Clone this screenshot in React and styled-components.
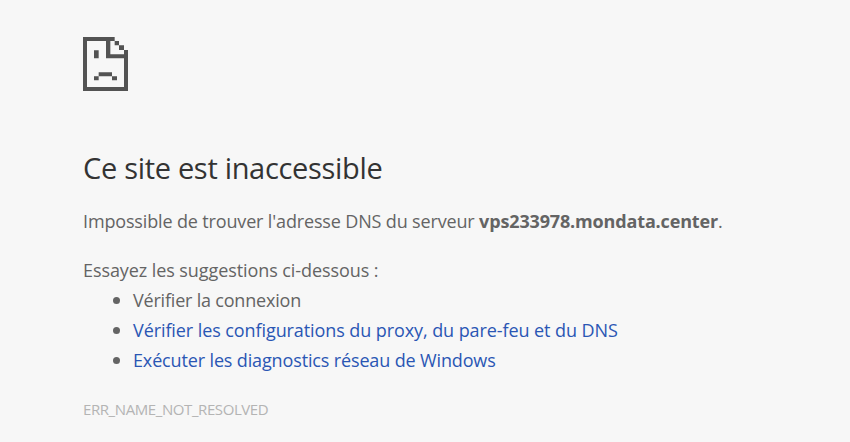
import React from "react";
import styled, { createGlobalStyle } from "styled-components";

const GlobalStyle = createGlobalStyle`
  body {
    margin: 0;
    background: #f7f7f7;
    color: #646464;
    font-family: "Open Sans", "Noto Sans", sans-serif;
  }
`;

const Page = styled.main`
  box-sizing: border-box;
  height: 442px;
  padding: 37px 83px 0;
  overflow: hidden;
`;

const SadPage = styled.svg`
  display: block;
  width: 45px;
  height: 54px;
  fill: #535353;
`;

const Title = styled.h1`
  width: max-content;
  margin: 57px 0 0;
  color: #333;
  font-size: 29px;
  font-weight: 400;
  line-height: 40px;
  letter-spacing: ${(p) => p.$track}px;
`;

const Line = styled.p`
  width: max-content;
  margin: ${(p) => p.$top}px 0 0;
  font-size: 18px;
  line-height: 30px;
  white-space: nowrap;
  letter-spacing: ${(p) => p.$track}px;
`;

const Host = styled.strong`
  font-weight: 700;
  letter-spacing: ${(p) => p.$track}px;
`;

const Suggestions = styled.ul`
  margin: 0;
  padding: 0 0 0 30px;
  list-style: none;
`;

const Suggestion = styled.li`
  display: flex;
  align-items: center;
  gap: 13px;
  height: 30px;
  font-size: 18px;
  line-height: 30px;
  white-space: nowrap;

  &::before {
    content: "";
    width: 7px;
    height: 7px;
    border-radius: 50%;
    background: #646464;
  }
`;

const Label = styled.span`
  letter-spacing: ${(p) => p.$track}px;
`;

const Link = styled.a`
  color: #2a56b4;
  text-decoration: none;
  letter-spacing: ${(p) => p.$track}px;
`;

const ErrorCode = styled.div`
  width: max-content;
  margin-top: 24px;
  color: #b4b4b4;
  font-size: 15px;
  line-height: 20px;
  letter-spacing: ${(p) => p.$track}px;
`;

export default function App() {
  return (
    <>
      <GlobalStyle />
      <Page>
        <SadPage viewBox="0 0 135 162" preserveAspectRatio="none" aria-hidden="true">
          <path d="M0 0H95V12H82V52H123V39H135V162H0ZM12 12V150H123V64H69V12Z" fillRule="evenodd" />
          <path d="M95 12h13v13H95zM108 25h15v14h-15zM33 40h14v24H33zM47 106h40v12H47zM33 118h14v12H33zM87 118h15v12H87z" />
        </SadPage>
        <Title $track={-0.31}>Ce site est inaccessible</Title>
        <Line $top={18} $track={-0.15}>
          Impossible de trouver l'adresse DNS du serveur <Host $track={-0.15}>vps233978.mondata.center</Host>.
        </Line>
        <Line $top={19} $track={-0.08}>Essayez les suggestions ci-dessous :</Line>
        <Suggestions>
          <Suggestion><Label $track={-0.2}>Vérifier la connexion</Label></Suggestion>
          <Suggestion><Link $track={-0.085}>Vérifier les configurations du proxy, du pare-feu et du DNS</Link></Suggestion>
          <Suggestion><Link $track={-0.14}>Exécuter les diagnostics réseau de Windows</Link></Suggestion>
        </Suggestions>
        <ErrorCode $track={-0.41}>ERR_NAME_NOT_RESOLVED</ErrorCode>
      </Page>
    </>
  );
}
